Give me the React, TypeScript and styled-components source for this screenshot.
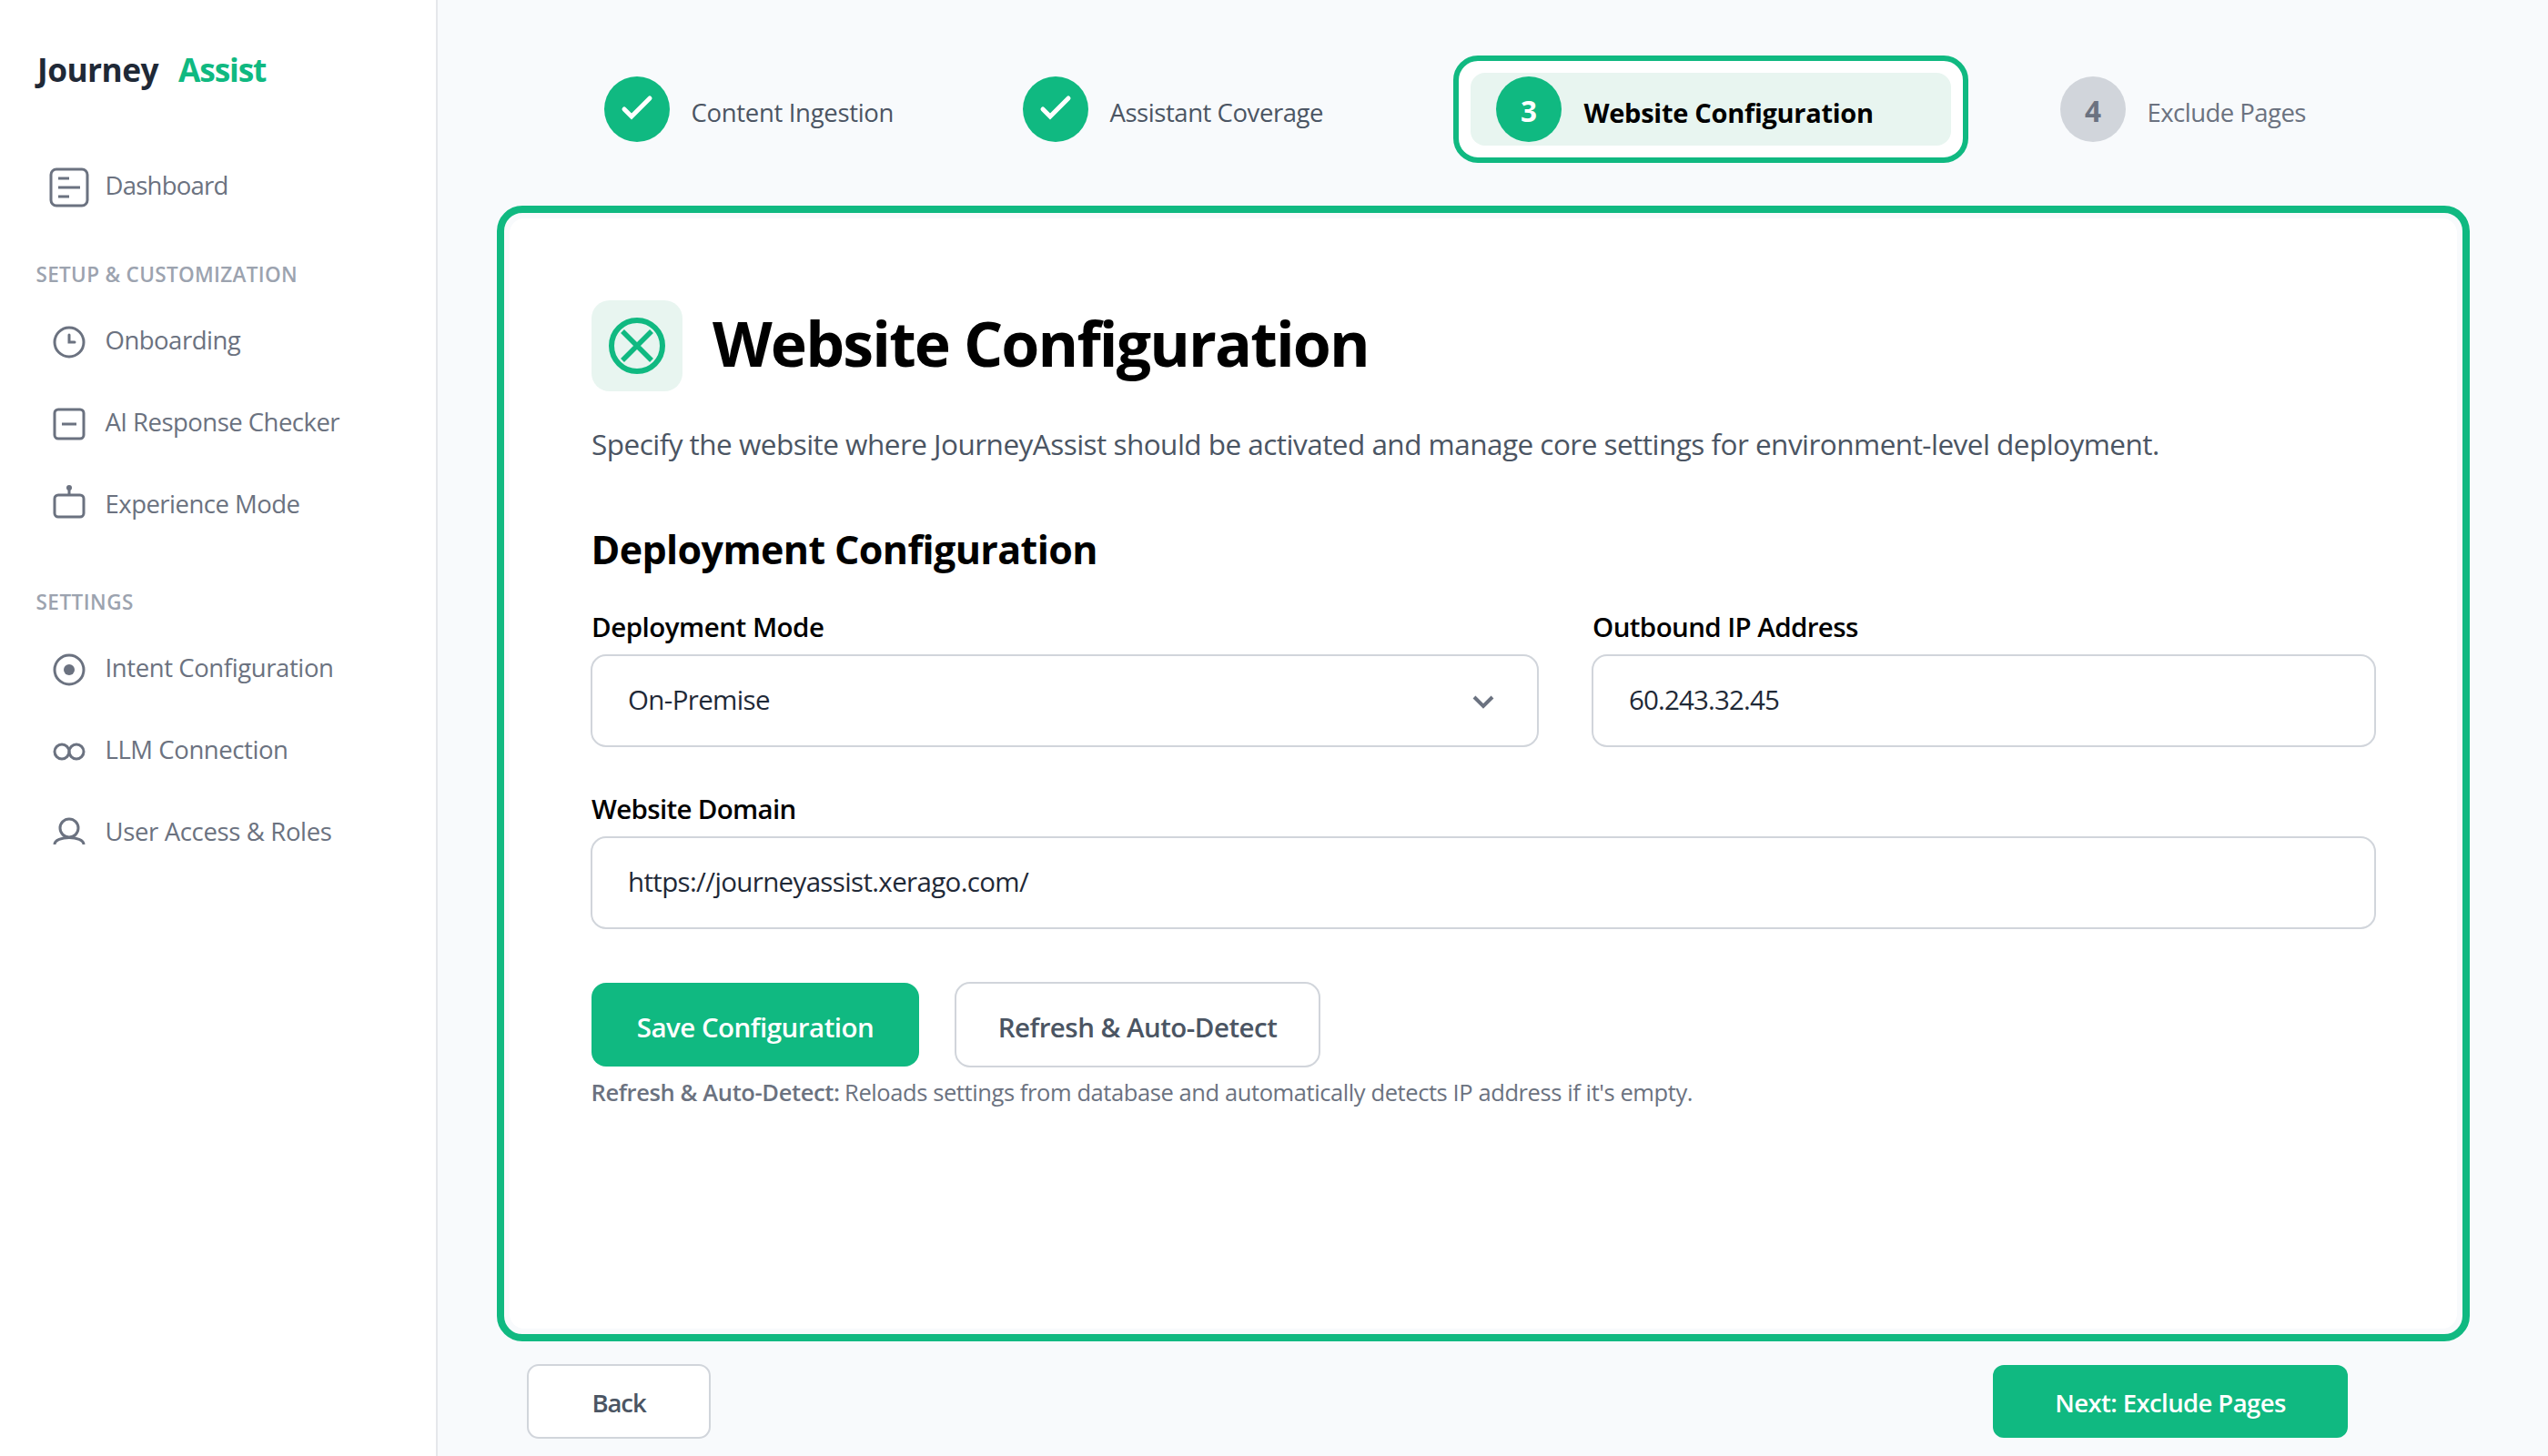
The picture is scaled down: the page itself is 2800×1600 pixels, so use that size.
import React from "react";
import styled, { createGlobalStyle, css } from "styled-components";

const color = {
  green: "#10b981",
  mint: "#e8f5f0",
  page: "#f8fafc",
  ink: "#1f2937",
  slate: "#4b5563",
  gray: "#6b7280",
  muted: "#9ca3af",
  line: "#d1d5db",
  hairline: "#e5e7eb",
};

const GlobalStyle = createGlobalStyle`
  *, *::before, *::after { box-sizing: border-box; }
  body {
    margin: 0;
    background: ${color.page};
    font-family: "Open Sans", "Noto Sans", sans-serif;
  }
`;

/* Tracking is tuned per string, in px. */
const tracked = css<{ $ls?: number }>`
  letter-spacing: ${(p) => p.$ls ?? 0}px;
  white-space: nowrap;
`;

const Shell = styled.div`
  display: flex;
  width: 2800px;
  height: 1600px;
  overflow: hidden;
`;

/* ---------- Sidebar ---------- */

const Sidebar = styled.aside`
  flex: none;
  width: 481px;
  padding-top: 56px;
  background: #fff;
  border-right: 2px solid ${color.hairline};
`;

const Brand = styled.div`
  display: flex;
  gap: 22px;
  height: 40px;
  margin-bottom: 65px;
  padding-left: 41px;
  font-size: 35.3px;
  font-weight: 700;
  line-height: 40px;
`;

const BrandWord = styled.span<{ $accent?: boolean; $ls?: number }>`
  ${tracked}
  color: ${(p) => (p.$accent ? color.green : color.ink)};
`;

const NavHeading = styled.h3<{ $space: number; $ls?: number }>`
  ${tracked}
  margin: ${(p) => p.$space}px 0 9px;
  padding-left: 39.5px;
  color: ${color.muted};
  font-size: 22.5px;
  font-weight: 600;
  line-height: 40px;
`;

const NavRow = styled.a`
  display: flex;
  align-items: center;
  gap: 15.5px;
  height: 90px;
  padding-left: 52px;
  color: ${color.gray};
`;

const NavGlyph = styled.svg`
  flex: none;
  width: 48px;
  height: 48px;
  fill: none;
  stroke: currentColor;
  stroke-width: 3;
`;

const NavLabel = styled.span<{ $ls?: number }>`
  ${tracked}
  margin-bottom: 4px;
  font-size: 27.5px;
  line-height: 40px;
`;

/* ---------- Stepper ---------- */

const Main = styled.main`
  flex: 1;
  display: flex;
  flex-direction: column;
  padding: 61px 86px 0 65px;
`;

const Stepper = styled.nav`
  display: grid;
  grid-template-columns: 460px 473px 667px auto;
  align-items: center;
  height: 118px;
  padding-left: 118px;
`;

const Step = styled.div`
  display: flex;
  align-items: center;
  gap: 23.5px;
`;

const ActiveFrame = styled.div`
  width: 566px;
  height: 118px;
  padding: 13px;
  background: #fff;
  border: 6px solid ${color.green};
  border-radius: 27px;
`;

const ActiveStep = styled(Step)`
  gap: 24.5px;
  height: 80px;
  padding-left: 28px;
  background: ${color.mint};
  border-radius: 16px;
`;

const StepDot = styled.span<{ $idle?: boolean }>`
  flex: none;
  display: flex;
  align-items: center;
  justify-content: center;
  width: 72px;
  height: 72px;
  border-radius: 50%;
  background: ${(p) => (p.$idle ? color.line : color.green)};
  color: ${(p) => (p.$idle ? color.gray : "#fff")};
`;

const StepNumber = styled.span`
  padding-top: 4px;
  font-size: 31.5px;
  font-weight: 700;
  line-height: 40px;
`;

const StepLabel = styled.span<{ $tone: "done" | "current" | "idle"; $ls?: number }>`
  ${tracked}
  padding-top: 8px;
  line-height: 40px;
  font-size: ${(p) => (p.$tone === "current" ? 29 : 27.5)}px;
  font-weight: ${(p) => (p.$tone === "current" ? 700 : 400)};
  color: ${(p) => ({ done: color.slate, current: "#000", idle: color.gray })[p.$tone]};
`;

/* ---------- Card ---------- */

const CardFrame = styled.section`
  width: 2168px;
  height: 1248px;
  margin-top: 47px;
  padding: 6px;
  border: 8px solid ${color.green};
  border-radius: 28px;
`;

const Card = styled.div`
  height: 100%;
  padding: 90px 89px 0 89px;
  background: #fff;
  border-radius: 16px;
`;

const TitleRow = styled.header`
  display: flex;
  align-items: center;
  gap: 33px;
  height: 100px;
  padding-left: 1px;
`;

const TitleIcon = styled.span`
  display: flex;
  align-items: center;
  justify-content: center;
  width: 100px;
  height: 100px;
  border-radius: 20px;
  background: ${color.mint};
`;

const Title = styled.h1<{ $ls?: number }>`
  ${tracked}
  margin: 0 0 7px;
  color: #000;
  font-size: 68px;
  font-weight: 700;
  line-height: 90px;
`;

const Subtitle = styled.p<{ $ls?: number }>`
  ${tracked}
  margin: 36px 0 0;
  padding-left: 1px;
  color: ${color.slate};
  font-size: 31.5px;
  line-height: 44px;
`;

const SectionTitle = styled.h2<{ $ls?: number }>`
  ${tracked}
  margin: 64px 0 35px;
  padding-left: 0.5px;
  color: #000;
  font-size: 43px;
  font-weight: 700;
  line-height: 60px;
`;

const FormGrid = styled.div`
  display: grid;
  grid-template-columns: 1042px 862px;
  gap: 48px 58px;
`;

const Field = styled.div<{ $wide?: boolean }>`
  display: flex;
  flex-direction: column;
  gap: 10px;
  ${(p) => p.$wide && "grid-column: 1 / -1;"}
`;

const FieldLabel = styled.label<{ $ls?: number }>`
  ${tracked}
  padding-left: 1px;
  color: #000;
  font-size: 29.5px;
  font-weight: 600;
  line-height: 40px;
`;

const Control = styled.div`
  display: flex;
  align-items: center;
  justify-content: space-between;
  height: 102px;
  padding: 0 46px 0 39px;
  background: #fff;
  border: 2px solid ${color.line};
  border-radius: 17px;
`;

const ControlValue = styled.span<{ $ls?: number }>`
  ${tracked}
  margin-bottom: 2px;
  color: ${color.ink};
  font-size: 29.5px;
  line-height: 40px;
`;

const Actions = styled.div`
  display: flex;
  align-items: center;
  gap: 39px;
  height: 94px;
  margin-top: 58px;
  padding-left: 1px;
`;

const Button = styled.button<{ $primary?: boolean; $ls?: number; $w: number; $h: number; $r: number; $size: number }>`
  ${tracked}
  display: flex;
  align-items: center;
  justify-content: center;
  width: ${(p) => p.$w}px;
  height: ${(p) => p.$h}px;
  padding: ${(p) => (p.$size > 28 ? 5 : 3)}px 0 0;
  border: ${(p) => (p.$primary ? "none" : `2px solid ${color.line}`)};
  border-radius: ${(p) => p.$r}px;
  background: ${(p) => (p.$primary ? color.green : "#fff")};
  color: ${(p) => (p.$primary ? "#fff" : color.slate)};
  font-family: inherit;
  font-size: ${(p) => p.$size}px;
  font-weight: 600;
  line-height: 40px;
`;

const Note = styled.p`
  display: flex;
  gap: 5.5px;
  margin: 9px 0 0;
  padding-left: 0.5px;
  color: ${color.gray};
  font-size: 25.5px;
  line-height: 36px;
`;

const NoteTerm = styled.strong<{ $ls?: number }>`
  ${tracked}
  font-weight: 600;
`;

const NoteText = styled.span<{ $ls?: number }>`
  ${tracked}
`;

const Footer = styled.footer`
  display: flex;
  align-items: center;
  justify-content: space-between;
  height: 82px;
  margin-top: 25px;
  padding: 0 134px 0 33px;
`;

/* ---------- Icons ---------- */

const DashboardIcon = () => (
  <NavGlyph viewBox="0 0 48 48">
    <rect x="4" y="4" width="40" height="40" rx="6" />
    <path d="M12 14h12M12 24h24M12 34h12" />
  </NavGlyph>
);
const ClockIcon = () => (
  <NavGlyph viewBox="0 0 48 48">
    <circle cx="24" cy="24" r="16" />
    <path d="M24 16v8h6" strokeLinecap="round" />
  </NavGlyph>
);
const CheckerIcon = () => (
  <NavGlyph viewBox="0 0 48 48">
    <rect x="8" y="8" width="32" height="32" rx="4" />
    <path d="M16 24h16" />
  </NavGlyph>
);
const ModeIcon = () => (
  <NavGlyph viewBox="0 0 48 48">
    <rect x="8" y="12" width="32" height="24" rx="4" />
    <path d="M24 12V4" />
    <circle cx="24" cy="4" r="3" fill="currentColor" stroke="none" />
  </NavGlyph>
);
const TargetIcon = () => (
  <NavGlyph viewBox="0 0 48 48">
    <circle cx="24" cy="24" r="16" />
    <circle cx="24" cy="24" r="6" fill="currentColor" stroke="none" />
  </NavGlyph>
);
const LinkIcon = () => (
  <NavGlyph viewBox="0 0 48 48">
    <circle cx="16" cy="24" r="8" />
    <circle cx="32" cy="24" r="8" />
  </NavGlyph>
);
const UserIcon = () => (
  <NavGlyph viewBox="0 0 48 48">
    <circle cx="24" cy="18" r="10" />
    <path d="M8 36C8 26 40 26 40 36" />
  </NavGlyph>
);
const CheckIcon = () => (
  <svg width="72" height="72" viewBox="0 0 72 72" fill="none">
    <path d="M22 36l8 8 20-20" stroke="#fff" strokeWidth="5" strokeLinecap="round" />
  </svg>
);
const CrossCircleIcon = () => (
  <svg width="64" height="64" viewBox="0 0 64 64" fill="none" stroke={color.green}>
    <circle cx="32" cy="32" r="28" strokeWidth="6" />
    <path d="M16 16l32 32M48 16L16 48" strokeWidth="5.5" />
  </svg>
);
const ChevronIcon = () => (
  <svg width="26" height="20" viewBox="0 0 26 20" fill="none">
    <path d="M3 6l10 10L23 6" stroke={color.gray} strokeWidth="4" />
  </svg>
);

/* ---------- Data ---------- */

type NavItem = { label: string; ls: number; icon: React.FC };

const setupItems: NavItem[] = [
  { label: "Onboarding", ls: -0.5, icon: ClockIcon },
  { label: "AI Response Checker", ls: -0.53, icon: CheckerIcon },
  { label: "Experience Mode", ls: -0.521, icon: ModeIcon },
];

const settingsItems: NavItem[] = [
  { label: "Intent Configuration", ls: -0.4, icon: TargetIcon },
  { label: "LLM Connection", ls: -0.429, icon: LinkIcon },
  { label: "User Access & Roles", ls: -0.35, icon: UserIcon },
];

const NavEntry = ({ label, ls, icon: Icon }: NavItem) => (
  <NavRow>
    <Icon />
    <NavLabel $ls={ls}>{label}</NavLabel>
  </NavRow>
);

export default function App() {
  return (
    <>
      <GlobalStyle />
      <Shell>
        <Sidebar>
          <Brand>
            <BrandWord $ls={-0.55}>Journey</BrandWord>
            <BrandWord $accent $ls={-1.152}>Assist</BrandWord>
          </Brand>
          <NavEntry label="Dashboard" ls={-0.762} icon={DashboardIcon} />
          <NavHeading $space={31} $ls={0.326}>SETUP &amp; CUSTOMIZATION</NavHeading>
          {setupItems.map((item) => <NavEntry key={item.label} {...item} />)}
          <NavHeading $space={41} $ls={0.476}>SETTINGS</NavHeading>
          {settingsItems.map((item) => <NavEntry key={item.label} {...item} />)}
        </Sidebar>

        <Main>
          <Stepper>
            <Step>
              <StepDot><CheckIcon /></StepDot>
              <StepLabel $tone="done" $ls={-0.319}>Content Ingestion</StepLabel>
            </Step>
            <Step>
              <StepDot><CheckIcon /></StepDot>
              <StepLabel $tone="done" $ls={-0.443}>Assistant Coverage</StepLabel>
            </Step>
            <ActiveFrame>
              <ActiveStep>
                <StepDot><StepNumber>3</StepNumber></StepDot>
                <StepLabel $tone="current" $ls={-0.28}>Website Configuration</StepLabel>
              </ActiveStep>
            </ActiveFrame>
            <Step>
              <StepDot $idle><StepNumber>4</StepNumber></StepDot>
              <StepLabel $tone="idle" $ls={-0.54}>Exclude Pages</StepLabel>
            </Step>
          </Stepper>

          <CardFrame>
            <Card>
              <TitleRow>
                <TitleIcon><CrossCircleIcon /></TitleIcon>
                <Title $ls={-1.873}>Website Configuration</Title>
              </TitleRow>
              <Subtitle $ls={-0.528}>
                Specify the website where JourneyAssist should be activated and manage core settings for environment-level deployment.
              </Subtitle>
              <SectionTitle $ls={-0.62}>Deployment Configuration</SectionTitle>

              <FormGrid>
                <Field>
                  <FieldLabel $ls={-0.483}>Deployment Mode</FieldLabel>
                  <Control>
                    <ControlValue $ls={-0.635}>On-Premise</ControlValue>
                    <ChevronIcon />
                  </Control>
                </Field>
                <Field>
                  <FieldLabel $ls={-0.591}>Outbound IP Address</FieldLabel>
                  <Control>
                    <ControlValue $ls={-0.835}>60.243.32.45</ControlValue>
                  </Control>
                </Field>
                <Field $wide>
                  <FieldLabel $ls={-0.675}>Website Domain</FieldLabel>
                  <Control>
                    <ControlValue $ls={-0.651}>https://journeyassist.xerago.com/</ControlValue>
                  </Control>
                </Field>
              </FormGrid>

              <Actions>
                <Button $primary $w={360} $h={92} $r={16} $size={29.5} $ls={-0.5}>Save Configuration</Button>
                <Button $w={402} $h={94} $r={17} $size={29.5} $ls={-0.516}>Refresh &amp; Auto-Detect</Button>
              </Actions>
              <Note>
                <NoteTerm $ls={-0.378}>Refresh &amp; Auto-Detect:</NoteTerm>
                <NoteText $ls={-0.41}>
                  Reloads settings from database and automatically detects IP address if it's empty.
                </NoteText>
              </Note>
            </Card>
          </CardFrame>

          <Footer>
            <Button $w={202} $h={82} $r={13} $size={27.5} $ls={-1.1}>Back</Button>
            <Button $primary $w={390} $h={80} $r={12} $size={27.5} $ls={-0.6}>Next: Exclude Pages</Button>
          </Footer>
        </Main>
      </Shell>
    </>
  );
}
